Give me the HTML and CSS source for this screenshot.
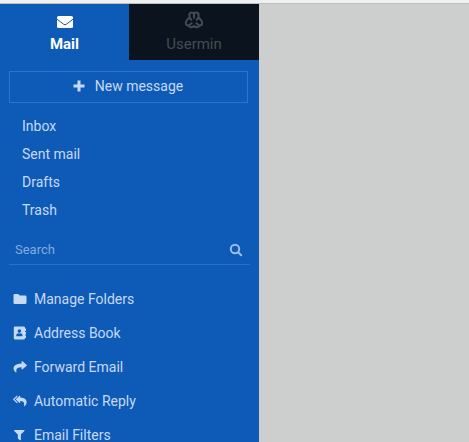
FILE: index.html
```html
<!DOCTYPE html>
<html lang="en">
<head>
<meta charset="utf-8">
<title>Mail</title>
<link rel="stylesheet" href="styles.css">
</head>
<body>
<div class="topbar"></div>
<div class="shell">
  <aside class="sidebar">
    <nav class="tabs">
      <a class="tab tab-active" href="#mail">
        <svg class="tab-icon" viewBox="0 0 18 18"><rect x="1" y="5" width="16" height="12" rx="1.5" fill="currentColor"/><path class="flap" d="M1 8.2L7.6 13.2Q9 14.2 10.4 13.2L17 8.2"/></svg>
        <span>Mail</span>
      </a>
      <a class="tab" href="#usermin">
        <svg class="tab-icon logo" viewBox="0 0 18 18"><path d="M9 3C8.2 .9 4.8 .8 4.4 3.2L4.6 6.6C2.4 8.2 .6 10.6 .9 12.6C1.1 13.9 2.2 14.6 3.6 14.5C4.4 16.8 7.2 16.6 9 14.9C10.8 16.6 13.6 16.8 14.4 14.5C15.8 14.6 16.9 13.9 17.1 12.6C17.4 10.6 15.6 8.2 13.4 6.6L13.6 3.2C13.2 .8 9.8 .9 9 3ZM9 3V6.8M4 14.2L6.6 12.2M14 14.2L11.4 12.2M4.8 6.8L6.4 8.8M13.2 6.8L11.6 8.8"/></svg>
        <span>Usermin</span>
      </a>
    </nav>
    <button class="compose" type="button">
      <svg class="icon" viewBox="0 0 14 14"><path d="M5.5 1.5h3v4h4v3h-4v4h-3v-4h-4v-3h4z"/></svg>
      <span>New message</span>
    </button>
    <nav class="folders">
      <a href="#inbox">Inbox</a>
      <a href="#sent">Sent mail</a>
      <a href="#drafts">Drafts</a>
      <a href="#trash">Trash</a>
    </nav>
    <form class="search">
      <input type="search" placeholder="Search" aria-label="Search">
      <button type="submit" aria-label="Search"><svg class="icon" viewBox="0 0 14 14"><circle class="lens" cx="6" cy="6" r="4.2"/><path class="handle" d="M9.2 9.2L12.2 12.2"/></svg></button>
    </form>
    <nav class="tools">
      <a href="#folders"><svg class="icon" viewBox="0 0 14 14"><path d="M1.6 2H5.2L6.9 3.5H12.2Q13.5 3.5 13.5 4.8V10.7Q13.5 12 12.2 12H1.8Q.5 12 .5 10.7V3.2Q.5 2 1.6 2Z"/></svg><span>Manage Folders</span></a>
      <a href="#contacts"><svg class="icon" viewBox="0 0 14 14"><path fill-rule="evenodd" d="M2.2 .5H10.7Q12 .5 12 1.8V2.5H13V5H12V6H13V8.5H12V9.5H13V12H12Q12 13.5 10.7 13.5H2.2Q.8 13.5 .8 12.2V1.8Q.8 .5 2.2 .5ZM6.4 3.3A1.8 1.8 0 1 0 6.4 6.9A1.8 1.8 0 1 0 6.4 3.3ZM3.3 10.3H9.5V9.2Q9.3 7.4 7.7 7.3Q6.4 7.9 5.1 7.3Q3.5 7.4 3.3 9.2Z"/></svg><span>Address Book</span></a>
      <a href="#forward"><svg class="icon" viewBox="0 0 14 14"><path d="M8.6 1.2Q8.7 .7 9.2 1L13.7 4.9Q14.1 5.3 13.7 5.7L9.2 9.6Q8.7 9.9 8.6 9.3V7.2C4.5 7.2 2.6 8.2 3.5 12.2Q3.5 12.8 2.9 12.5C-1.5 9 .2 3.5 8.6 3.4Z"/></svg><span>Forward Email</span></a>
      <a href="#reply"><svg class="icon" viewBox="0 0 14 14"><path d="M7.2 1.9Q7.1 1.3 6.6 1.7L3.1 4.9Q2.7 5.3 3.1 5.7L6.6 8.9Q7.1 9.3 7.2 8.7V7.1C10.2 7.1 11.8 8.2 11 11.9Q11 12.6 11.6 12.2C15.5 8.5 13.7 3.8 7.2 3.6Z"/><path d="M4.4 1.6V2.7L2 4.9Q1.5 5.3 2 5.7L4.4 7.9V9Q4.1 9.3 3.7 8.9L.3 5.7Q-.1 5.3 .3 4.9L3.7 1.7Q4.1 1.3 4.4 1.6Z"/></svg><span>Automatic Reply</span></a>
      <a href="#filters"><svg class="icon" viewBox="0 0 14 14"><path d="M1.5 2H11.1Q12 2.1 11.4 2.9L7.9 6.6V11.8Q7.8 12.6 7.1 12.2L5.2 10.9Q4.8 10.6 4.8 10.2V6.6L1.2 2.9Q.7 2.1 1.5 2Z"/></svg><span>Email Filters</span></a>
    </nav>
  </aside>
  <main class="content"></main>
</div>
</body>
</html>
```
FILE: styles.css
```css
* { box-sizing: border-box; }

body {
  margin: 0;
  height: 100vh;
  overflow: hidden;
  display: flex;
  flex-direction: column;
  background: #cdcfce;
  font: 14px/20px Roboto, sans-serif;
}

a { color: inherit; text-decoration: none; }
button, input { font: inherit; color: inherit; background: none; border: 0; padding: 0; }

.topbar {
  flex: none;
  height: 4px;
  background: #f0f0f0;
  border-bottom: 1px solid #bcc0c2;
}

.shell { flex: 1; min-height: 0; display: flex; }
.content { flex: 1; }

.sidebar {
  flex: none;
  width: 259px;
  overflow: hidden;
  background: #0e5ab7;
  color: #c6d9f7;
}

.tabs { display: grid; grid-template-columns: 129px 1fr; height: 56px; }

.tab {
  display: flex;
  flex-direction: column;
  align-items: center;
  gap: 4px;
  padding-top: 7px;
  background: #0b141e;
  color: #444c55;
  font-size: 15px;
  line-height: 22px;
}

.tab-active { background: #0e5ab7; color: #fff; font-weight: 700; }
.tab-icon { width: 18px; height: 18px; }
.flap { fill: none; stroke: #0e5ab7; stroke-width: 1; }
.logo { fill: none; stroke: currentColor; stroke-width: 2; stroke-linejoin: round; stroke-linecap: round; overflow: visible; }

.icon { flex: none; width: 14px; height: 14px; fill: currentColor; }

.compose {
  display: flex;
  align-items: center;
  justify-content: center;
  gap: 9px;
  width: 239px;
  height: 32px;
  margin: 11px 9px 9px;
  padding: 0 2px 2px 0;
  border: 1px solid #3473c4;
}

.folders { display: flex; flex-direction: column; padding-left: 22px; line-height: 28px; }

.search {
  display: flex;
  align-items: center;
  height: 29px;
  margin: 12px 9px 17px;
  padding: 0 7px 0 6px;
  border-bottom: 1px solid #2e6fc1;
}

.search input { flex: 1; min-width: 0; font-size: 13px; outline: 0; appearance: none; }
.search input::placeholder { color: #84abdf; opacity: 1; }
.search button { display: flex; color: #9dbdeb; }
.lens { fill: none; stroke: currentColor; stroke-width: 2; }
.handle { stroke: currentColor; stroke-width: 2; stroke-linecap: round; }

.tools { display: flex; flex-direction: column; padding-left: 13px; }
.tools a { display: flex; align-items: center; gap: 7px; height: 34px; }
```
